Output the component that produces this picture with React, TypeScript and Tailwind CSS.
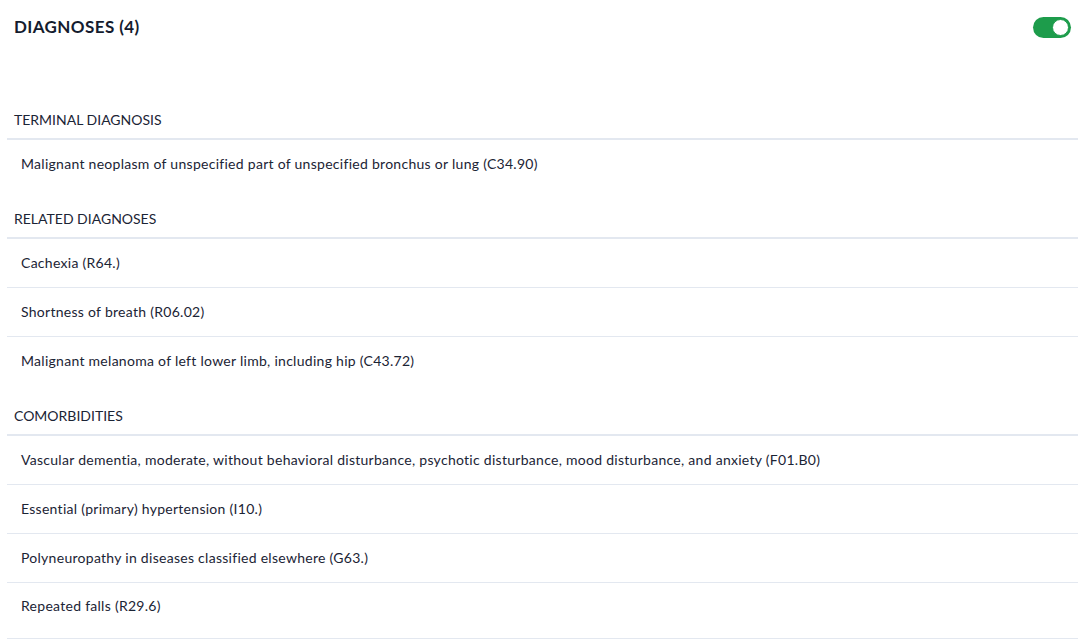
const sections = [
  {
    title: 'TERMINAL DIAGNOSIS',
    items: ['Malignant neoplasm of unspecified part of unspecified bronchus or lung (C34.90)'],
  },
  {
    title: 'RELATED DIAGNOSES',
    items: [
      'Cachexia (R64.)',
      'Shortness of breath (R06.02)',
      'Malignant melanoma of left lower limb, including hip (C43.72)',
    ],
  },
  {
    title: 'COMORBIDITIES',
    items: [
      'Vascular dementia, moderate, without behavioral disturbance, psychotic disturbance, mood disturbance, and anxiety (F01.B0)',
      'Essential (primary) hypertension (I10.)',
      'Polyneuropathy in diseases classified elsewhere (G63.)',
      'Repeated falls (R29.6)',
    ],
  },
]

const Toggle = () => (
  <div className="flex h-[21px] w-[38px] items-center justify-end rounded-full bg-[#1d9c4b] p-[2px]">
    <div className="h-[17px] w-[17px] rounded-full border border-[#1d9c4b] bg-white"></div>
  </div>
)

export default function App() {
  return (
    <div className="min-h-screen bg-white px-[7px] pt-[17px] text-[#1b2435]" style={{ fontFamily: 'Lato, "Open Sans", sans-serif' }}>
      <div className="flex h-[21px] items-start justify-between pl-[7px] pr-[13px]">
        <h1 className="-mt-[1px] text-[17px] font-bold leading-[21px] tracking-[0.4px] text-[#141c2e]">DIAGNOSES (4)</h1>
        <Toggle />
      </div>

      <div className="mt-[52px] w-[1071px]">
        {sections.map((section, si) => (
          <div key={section.title}>
            <div className="border-b-2 border-[#e3e8f0] pl-[7px] pt-[20px] pb-[8px] text-[14px] leading-[20px]">
              {section.title}
            </div>
            {section.items.map((item, i) => {
              const last = i === section.items.length - 1
              const final = last && si === sections.length - 1
              if (final) {
                return (
                  <div key={item} className="h-[56px] border-b border-[#e3e8f0] pl-[14px] pt-[13px] text-[14px] leading-[20px] tracking-[0.28px]">
                    {item}
                  </div>
                )
              }
              return (
                <div key={item} className={`flex h-[49px] items-center pb-[2px] pl-[14px] text-[14px] tracking-[0.28px] ${last ? '' : 'border-b border-[#e3e8f0]'}`}>
                  {item}
                </div>
              )
            })}
          </div>
        ))}
      </div>
    </div>
  )
}
